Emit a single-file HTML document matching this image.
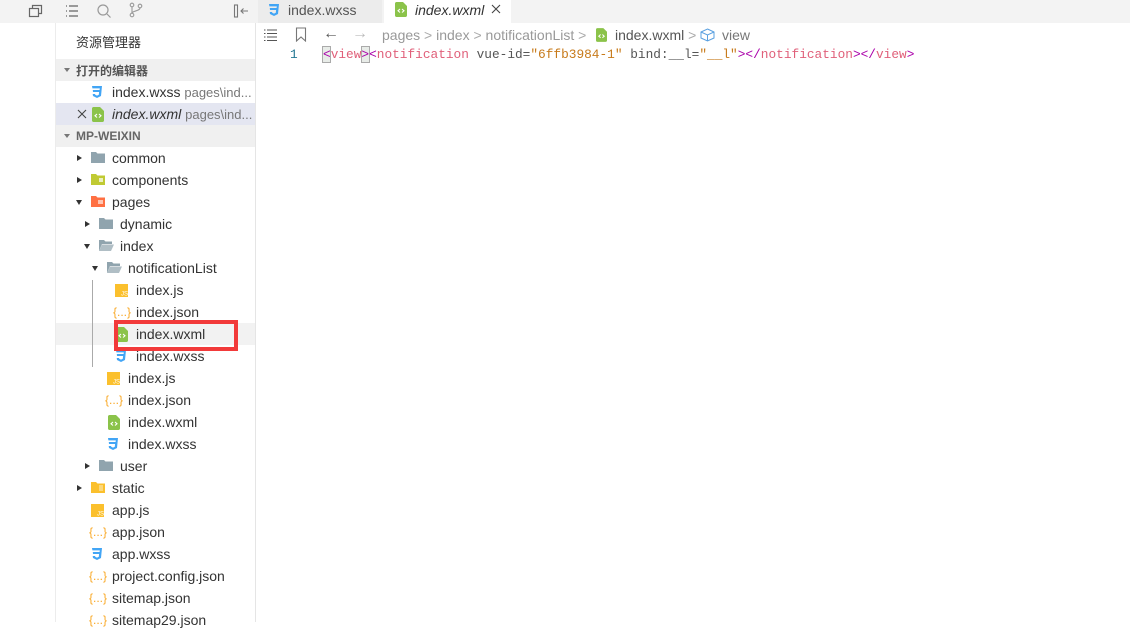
<!DOCTYPE html>
<html><head><meta charset="utf-8"><style>
*{margin:0;padding:0;box-sizing:border-box}
body{width:1130px;height:622px;overflow:hidden;background:#fff;font-family:"Liberation Sans","Noto Sans CJK SC",sans-serif;font-size:14px;color:#333;position:relative}
.abs{position:absolute}
.row{position:absolute;left:56px;width:199px;height:22px;line-height:22px;white-space:nowrap}
.row .t{position:absolute;top:0}
.row .a{position:absolute;top:8px;width:0;height:0}
.ar{border-top:3px solid transparent;border-bottom:3px solid transparent;border-left:5px solid #333}
.ad{border-left:3px solid transparent;border-right:3px solid transparent;border-top:5px solid #333;top:9px!important}
.row svg{position:absolute;top:4px}
.code{font-family:"Liberation Mono",monospace;font-size:12.8px;line-height:17px}
</style></head><body>
<div class="abs" style="left:0;top:0;width:1130px;height:23px;background:#f3f3f3"></div>
<div class="abs" style="left:258px;top:0;width:124px;height:23px;background:#ececec"></div>
<div class="abs" style="left:384px;top:0;width:127px;height:23px;background:#fff"></div>
<div class="abs" style="left:512px;top:0;width:618px;height:23px;background:#f3f3f3"></div>
<svg class="abs" style="left:28px;top:3px" width="16" height="16" viewBox="0 0 16 16" fill="none" stroke="#666" stroke-width="1.2"><rect x="1.5" y="5.5" width="9" height="8"/><path d="M4.5 5.5V2.5h9v8h-3"/></svg>
<svg class="abs" style="left:64px;top:3px" width="16" height="16" viewBox="0 0 16 16" stroke="#666" stroke-width="1.3"><path d="M2 3h1M5 3h9M2 8h1M5 8h9M2 13h1M5 13h9"/></svg>
<svg class="abs" style="left:96px;top:3px" width="16" height="16" viewBox="0 0 16 16" fill="none" stroke="#999" stroke-width="1.2"><circle cx="7" cy="7" r="5"/><path d="M11 11l3.5 3.5"/></svg>
<svg class="abs" style="left:128px;top:2px" width="16" height="16" viewBox="0 0 16 16" fill="none" stroke="#999" stroke-width="1.1"><circle cx="4" cy="3" r="1.8"/><circle cx="4" cy="13" r="1.8"/><circle cx="12" cy="4" r="1.8"/><path d="M4 5v6M12 6c0 3-8 3-8 5"/></svg>
<svg class="abs" style="left:233px;top:3px" width="16" height="16" viewBox="0 0 16 16" fill="none" stroke="#777" stroke-width="1.1"><rect x="1.5" y="2" width="3" height="12"/><path d="M15 8H8M10.5 5.5L8 8l2.5 2.5"/></svg>
<svg class="abs" style="left:268px;top:3px" width="12" height="14" viewBox="0 0 12 14"><path d="M1 1h10l-1 10-4 2-4-2-.3-2h2.4l.1 .8 1.8.8 1.8-.8.3-2.8H2L1.8 5h6.8l.2-1.6H1.4z" fill="#42a5f5"/></svg>
<div class="abs" style="left:288px;top:2px;font-size:14px;color:#555">index.wxss</div>
<svg class="abs" style="left:395px;top:2px" width="12" height="15" viewBox="0 0 12 15"><path d="M0 1.5C0 .7.7 0 1.5 0H8l4 4v9.5c0 .8-.7 1.5-1.5 1.5h-9C.7 15 0 14.3 0 13.5z" fill="#8bc34a"/><path d="M5 7l-2 1.8L5 10.5M7 7l2 1.8L7 10.5" stroke="#fff" stroke-width="1.1" fill="none"/></svg>
<div class="abs" style="left:415px;top:2px;font-style:italic;color:#333">index.wxml</div>
<svg class="abs" style="left:491px;top:4px" width="10" height="10" viewBox="0 0 10 10" stroke="#444" stroke-width="1.1"><path d="M1 1l8 8M9 1l-8 8"/></svg>
<div class="abs" style="left:255px;top:23px;width:1px;height:599px;background:#e5e5e5"></div>
<div class="abs" style="left:55px;top:23px;width:1px;height:599px;background:#ececec"></div>
<div class="abs" style="left:76px;top:32px;font-size:13px;color:#333">资源管理器</div>
<div class="abs" style="left:56px;top:59px;width:199px;height:22px;background:#f0f0f0"></div>
<div class="abs" style="left:64px;top:68px;border-left:3px solid transparent;border-right:3px solid transparent;border-top:4px solid #777"></div>
<div class="abs" style="left:76px;top:62px;font-size:12px;font-weight:bold;color:#555">打开的编辑器</div>
<div class="row" style="top:81px"><svg style="left:35px" width="12" height="14" viewBox="0 0 12 14"><path d="M1 1h10l-1 10-4 2-4-2-.3-2h2.4l.1 .8 1.8.8 1.8-.8.3-2.8H2L1.8 5h6.8l.2-1.6H1.4z" fill="#42a5f5"/></svg><span class="t" style="left:56px">index.wxss <span style="font-size:13px;color:#777">pages\ind...</span></span></div>
<div class="row" style="top:103px;background:#e4e6f1"><svg style="left:21px;top:6px" width="10" height="10" viewBox="0 0 10 10" stroke="#444" stroke-width="1.1"><path d="M1 1l8 8M9 1l-8 8"/></svg><svg style="left:36px" width="12" height="15" viewBox="0 0 12 15"><path d="M0 1.5C0 .7.7 0 1.5 0H8l4 4v9.5c0 .8-.7 1.5-1.5 1.5h-9C.7 15 0 14.3 0 13.5z" fill="#8bc34a"/><path d="M5 7l-2 1.8L5 10.5M7 7l2 1.8L7 10.5" stroke="#fff" stroke-width="1.1" fill="none"/></svg><span class="t" style="left:56px"><i>index.wxml</i> <span style="font-size:13px;color:#777">pages\ind...</span></span></div>
<div class="abs" style="left:56px;top:125px;width:199px;height:22px;background:#f0f0f0"></div>
<div class="abs" style="left:64px;top:134px;border-left:3px solid transparent;border-right:3px solid transparent;border-top:4px solid #777"></div>
<div class="abs" style="left:76px;top:129px;font-size:12px;font-weight:bold;color:#666">MP-WEIXIN</div>
<div class="abs" style="left:56px;top:323px;width:199px;height:22px;background:#f2f2f2"></div>
<div class="abs" style="left:92px;top:280px;width:1px;height:87px;background:#aaa"></div>

<div class="row" style="top:147px"><i class="a ar" style="left:21px"></i><svg style="left:35px" width="14" height="12" viewBox="0 0 14 12"><path d="M0 1h5l1.5 1.5H14V12H0z" fill="#90a4ae"/></svg><span class="t" style="left:56px">common</span></div>
<div class="row" style="top:169px"><i class="a ar" style="left:21px"></i><svg style="left:35px" width="14" height="12" viewBox="0 0 14 12"><path d="M0 1h5l1.5 1.5H14V12H0z" fill="#c0ca33"/><rect x="8" y="5" width="4" height="4" fill="#fff" opacity=".7"/></svg><span class="t" style="left:56px">components</span></div>
<div class="row" style="top:191px"><i class="a ad" style="left:20px"></i><svg style="left:35px" width="14" height="12" viewBox="0 0 14 12"><path d="M0 1h5l1.5 1.5H14V12H0z" fill="#ff7043"/><rect x="7" y="5" width="5" height="4" fill="#fff" opacity=".6"/></svg><span class="t" style="left:56px">pages</span></div>
<div class="row" style="top:213px"><i class="a ar" style="left:29px"></i><svg style="left:43px" width="14" height="12" viewBox="0 0 14 12"><path d="M0 1h5l1.5 1.5H14V12H0z" fill="#90a4ae"/></svg><span class="t" style="left:64px">dynamic</span></div>
<div class="row" style="top:235px"><i class="a ad" style="left:28px"></i><svg style="left:43px" width="15" height="12" viewBox="0 0 15 12"><path d="M0 1h5l1.5 1.5H13V5H3L0 12z" fill="#90a4ae"/><path d="M3 5.5h12L12 12H0z" fill="#b0bec5"/></svg><span class="t" style="left:64px">index</span></div>
<div class="row" style="top:257px"><i class="a ad" style="left:36px"></i><svg style="left:51px" width="15" height="12" viewBox="0 0 15 12"><path d="M0 1h5l1.5 1.5H13V5H3L0 12z" fill="#90a4ae"/><path d="M3 5.5h12L12 12H0z" fill="#b0bec5"/></svg><span class="t" style="left:72px">notificationList</span></div>
<div class="row" style="top:279px"><svg style="left:59px;top:5px" width="13" height="13" viewBox="0 0 13 13"><rect width="13" height="13" fill="#fbc02d"/><text x="6" y="11.5" font-size="6" fill="#fff" font-family="Liberation Sans">JS</text></svg><span class="t" style="left:80px">index.js</span></div>
<div class="row" style="top:301px"><span class="t" style="left:57px;font-size:12px;color:#f9a825">{...}</span><span class="t" style="left:80px">index.json</span></div>
<div class="row" style="top:323px"><svg style="left:60px" width="12" height="15" viewBox="0 0 12 15"><path d="M0 1.5C0 .7.7 0 1.5 0H8l4 4v9.5c0 .8-.7 1.5-1.5 1.5h-9C.7 15 0 14.3 0 13.5z" fill="#8bc34a"/><path d="M5 7l-2 1.8L5 10.5M7 7l2 1.8L7 10.5" stroke="#fff" stroke-width="1.1" fill="none"/></svg><span class="t" style="left:80px">index.wxml</span></div>
<div class="row" style="top:345px"><svg style="left:59px" width="12" height="14" viewBox="0 0 12 14"><path d="M1 1h10l-1 10-4 2-4-2-.3-2h2.4l.1 .8 1.8.8 1.8-.8.3-2.8H2L1.8 5h6.8l.2-1.6H1.4z" fill="#42a5f5"/></svg><span class="t" style="left:80px">index.wxss</span></div>
<div class="row" style="top:367px"><svg style="left:51px;top:5px" width="13" height="13" viewBox="0 0 13 13"><rect width="13" height="13" fill="#fbc02d"/><text x="6" y="11.5" font-size="6" fill="#fff" font-family="Liberation Sans">JS</text></svg><span class="t" style="left:72px">index.js</span></div>
<div class="row" style="top:389px"><span class="t" style="left:49px;font-size:12px;color:#f9a825">{...}</span><span class="t" style="left:72px">index.json</span></div>
<div class="row" style="top:411px"><svg style="left:52px" width="12" height="15" viewBox="0 0 12 15"><path d="M0 1.5C0 .7.7 0 1.5 0H8l4 4v9.5c0 .8-.7 1.5-1.5 1.5h-9C.7 15 0 14.3 0 13.5z" fill="#8bc34a"/><path d="M5 7l-2 1.8L5 10.5M7 7l2 1.8L7 10.5" stroke="#fff" stroke-width="1.1" fill="none"/></svg><span class="t" style="left:72px">index.wxml</span></div>
<div class="row" style="top:433px"><svg style="left:51px" width="12" height="14" viewBox="0 0 12 14"><path d="M1 1h10l-1 10-4 2-4-2-.3-2h2.4l.1 .8 1.8.8 1.8-.8.3-2.8H2L1.8 5h6.8l.2-1.6H1.4z" fill="#42a5f5"/></svg><span class="t" style="left:72px">index.wxss</span></div>
<div class="row" style="top:455px"><i class="a ar" style="left:29px"></i><svg style="left:43px" width="14" height="12" viewBox="0 0 14 12"><path d="M0 1h5l1.5 1.5H14V12H0z" fill="#90a4ae"/></svg><span class="t" style="left:64px">user</span></div>
<div class="row" style="top:477px"><i class="a ar" style="left:21px"></i><svg style="left:35px" width="14" height="12" viewBox="0 0 14 12"><path d="M0 1h5l1.5 1.5H14V12H0z" fill="#fbc02d"/><path d="M8 5h4M8 7h4M8 9h4" stroke="#fff" stroke-width=".8"/></svg><span class="t" style="left:56px">static</span></div>
<div class="row" style="top:499px"><svg style="left:35px;top:5px" width="13" height="13" viewBox="0 0 13 13"><rect width="13" height="13" fill="#fbc02d"/><text x="6" y="11.5" font-size="6" fill="#fff" font-family="Liberation Sans">JS</text></svg><span class="t" style="left:56px">app.js</span></div>
<div class="row" style="top:521px"><span class="t" style="left:33px;font-size:12px;color:#f9a825">{...}</span><span class="t" style="left:56px">app.json</span></div>
<div class="row" style="top:543px"><svg style="left:35px" width="12" height="14" viewBox="0 0 12 14"><path d="M1 1h10l-1 10-4 2-4-2-.3-2h2.4l.1 .8 1.8.8 1.8-.8.3-2.8H2L1.8 5h6.8l.2-1.6H1.4z" fill="#42a5f5"/></svg><span class="t" style="left:56px">app.wxss</span></div>
<div class="row" style="top:565px"><span class="t" style="left:33px;font-size:12px;color:#f9a825">{...}</span><span class="t" style="left:56px">project.config.json</span></div>
<div class="row" style="top:587px"><span class="t" style="left:33px;font-size:12px;color:#f9a825">{...}</span><span class="t" style="left:56px">sitemap.json</span></div>
<div class="row" style="top:609px"><span class="t" style="left:33px;font-size:12px;color:#f9a825">{...}</span><span class="t" style="left:56px">sitemap29.json</span></div>
<div class="abs" style="left:114px;top:320px;width:124px;height:31px;border:4px solid #f23a3a"></div>

<svg class="abs" style="left:263px;top:28px" width="15" height="14" viewBox="0 0 15 14" stroke="#555" stroke-width="1.1"><path d="M1 2h1.5M4 2h10M1 5.5h1.5M4 5.5h10M1 9h1.5M4 9h10M1 12.5h1.5M4 12.5h10"/></svg>
<svg class="abs" style="left:295px;top:27px" width="12" height="15" viewBox="0 0 12 15" fill="none" stroke="#777" stroke-width="1.1"><path d="M1.5 1h9v13L6 10l-4.5 4z"/></svg>
<div class="abs" style="left:323px;top:25px;font-size:16px;color:#555">←</div>
<div class="abs" style="left:352px;top:25px;font-size:16px;color:#bbb">→</div>
<div class="abs" style="left:382px;top:27px;color:#999">pages <span style="color:#aaa">&gt;</span> index <span style="color:#aaa">&gt;</span> notificationList <span style="color:#aaa">&gt;</span></div>
<svg class="abs" style="left:596px;top:28px" width="11" height="14" viewBox="0 0 12 15"><path d="M0 1.5C0 .7.7 0 1.5 0H8l4 4v9.5c0 .8-.7 1.5-1.5 1.5h-9C.7 15 0 14.3 0 13.5z" fill="#8bc34a"/><path d="M5 7l-2 1.8L5 10.5M7 7l2 1.8L7 10.5" stroke="#fff" stroke-width="1.1" fill="none"/></svg>
<div class="abs" style="left:615px;top:27px;color:#555">index.wxml <span style="color:#aaa">&gt;</span></div>
<svg class="abs" style="left:700px;top:28px" width="15" height="14" viewBox="0 0 15 14" fill="none" stroke="#5aa0e0" stroke-width="1"><path d="M7.5 1L14 4v6l-6.5 3L1 10V4zM1 4l6.5 3L14 4M7.5 7v6"/></svg>
<div class="abs" style="left:722px;top:27px;color:#777">view</div>
<div class="abs code" style="left:290px;top:46px;color:#237893">1</div>
<div class="abs" style="left:322px;top:46px;width:9px;height:17px;background:#e8ece8;border:1px solid #aaa"></div>
<div class="abs" style="left:361px;top:46px;width:9px;height:17px;background:#e8ece8;border:1px solid #aaa"></div>
<div class="abs code" style="left:323px;top:46px;white-space:pre"><span style="color:#a0a">&lt;</span><span style="color:#e0607a">view</span><span style="color:#a0a">&gt;&lt;</span><span style="color:#e0607a">notification</span> <span style="color:#555">vue-id=</span><span style="color:#c77a1a">"6ffb3984-1"</span> <span style="color:#555">bind:__l=</span><span style="color:#c77a1a">"__l"</span><span style="color:#a0a">&gt;&lt;/</span><span style="color:#e0607a">notification</span><span style="color:#a0a">&gt;&lt;/</span><span style="color:#e0607a">view</span><span style="color:#a0a">&gt;</span></div>
</body></html>
